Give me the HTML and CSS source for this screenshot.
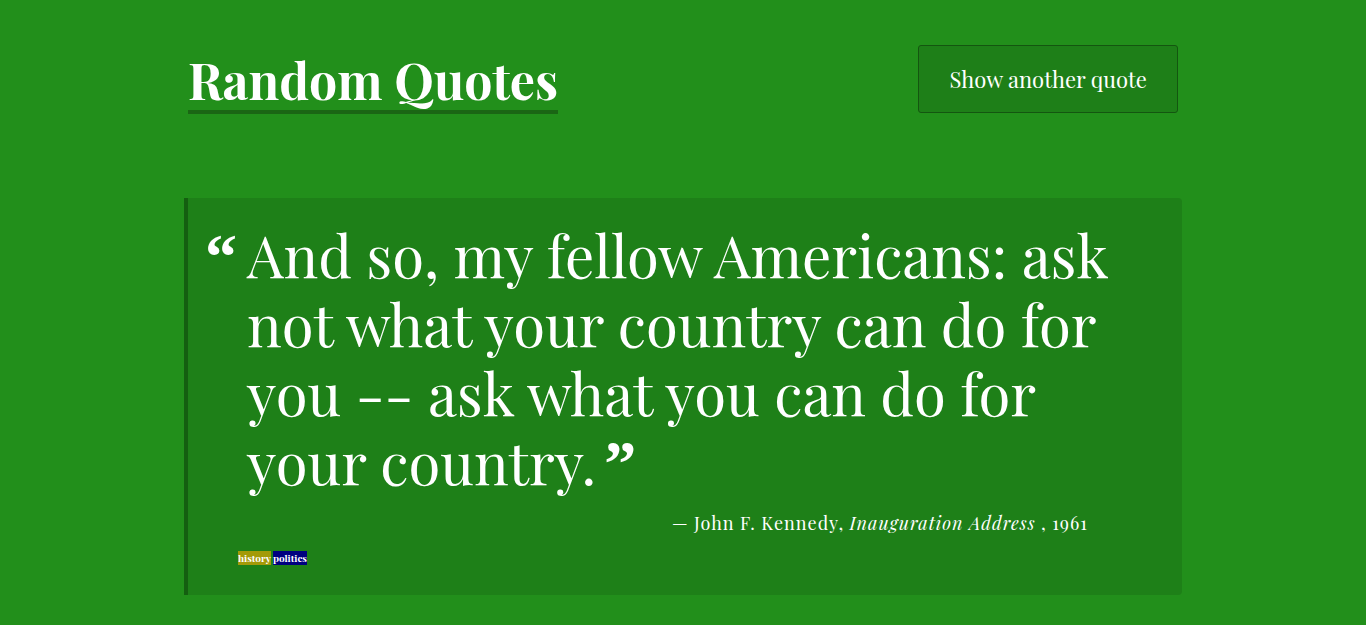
FILE: index.html
```html
<!DOCTYPE html>
<html lang="en">
<head>
<meta charset="utf-8">
<title>Random Quotes</title>
<meta name="viewport" content="width=device-width, initial-scale=1">
<link rel="stylesheet" href="styles.css">
</head>
<body>
<div class="container">
  <header class="header">
    <h1 class="title">Random Quotes</h1>
    <button class="load-quote" type="button">Show another quote</button>
  </header>
  <main class="quote-box">
    <blockquote class="quote"><span class="mark mark-open">“</span>And so, my fellow Americans: ask not what your country can do for you -- ask what you can do for your country.<span class="mark mark-close">”</span></blockquote>
    <p class="source">— John F. Kennedy, <cite class="citation">Inauguration Address</cite> , 1961</p>
    <p class="tags"><span class="tag history">history</span> <span class="tag politics">politics</span></p>
  </main>
</div>
</body>
</html>
```

FILE: styles.css
```css
* { box-sizing: border-box; }
body {
  margin: 0;
  background: #228f1b;
  color: #fff;
  font-family: "Playfair Display", "Liberation Serif", serif;
}
.container { max-width: 998px; margin: 0 auto; padding: 45px 0 30px; }
.header {
  display: flex;
  justify-content: space-between;
  align-items: flex-start;
  padding: 0 4px;
  margin-bottom: 84px;
}
.title {
  margin: 5px 0 0;
  border-bottom: 4px solid #1a6614;
  font-size: 50px;
  line-height: 60px;
}
.load-quote {
  padding: 18px 30px;
  border: 1px solid #145610;
  border-radius: 3px;
  background: #1e7f18;
  color: #fff;
  font-family: inherit;
  font-size: 22px;
  line-height: 30px;
}
.quote-box {
  padding: 22px 74px 30px 50px;
  border-left: 4px solid #145f10;
  border-radius: 0 4px 4px 0;
  background: #1e8018;
}
.quote {
  margin: 0 0 0 9px;
  font-size: 58px;
  line-height: 69px;
}
.mark {
  display: inline-block;
  font-family: "Liberation Serif", serif;
  font-size: 64px;
  font-weight: 700;
  line-height: 60px;
}
.mark-open { width: 42px; margin-left: -42px; }
.mark-close { margin-left: 8px; }
.source { margin: 15px 20px 0 0; font-size: 18px; line-height: 24px; letter-spacing: 1px; text-align: right; }
.tags { margin: 17px 0 0; font-size: 10px; line-height: 13px; font-weight: 700; }
.history { background: #a39a08; }
.politics { background: #000080; }
```
